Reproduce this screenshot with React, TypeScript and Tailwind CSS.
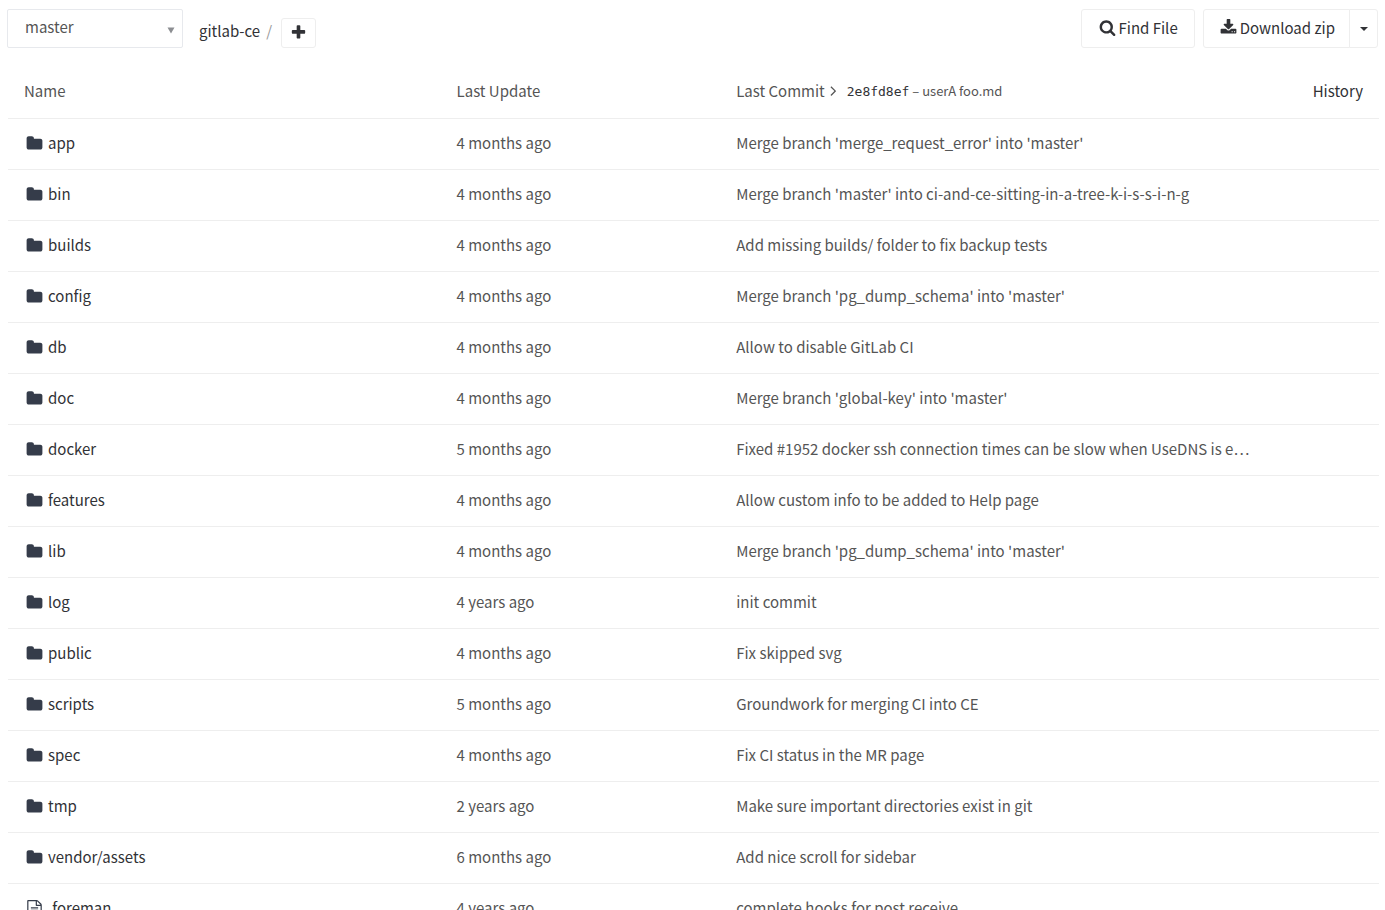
import { useState } from 'react';
import type { ReactNode } from 'react';

interface TreeEntry {
  name: string;
  type: 'folder' | 'file';
  updated: string;
  commit: string;
}

const entries: TreeEntry[] = [
  { name: 'app', type: 'folder', updated: '4 months ago', commit: "Merge branch 'merge_request_error' into 'master'" },
  { name: 'bin', type: 'folder', updated: '4 months ago', commit: "Merge branch 'master' into ci-and-ce-sitting-in-a-tree-k-i-s-s-i-n-g" },
  { name: 'builds', type: 'folder', updated: '4 months ago', commit: 'Add missing builds/ folder to fix backup tests' },
  { name: 'config', type: 'folder', updated: '4 months ago', commit: "Merge branch 'pg_dump_schema' into 'master'" },
  { name: 'db', type: 'folder', updated: '4 months ago', commit: 'Allow to disable GitLab CI' },
  { name: 'doc', type: 'folder', updated: '4 months ago', commit: "Merge branch 'global-key' into 'master'" },
  { name: 'docker', type: 'folder', updated: '5 months ago', commit: 'Fixed #1952 docker ssh connection times can be slow when UseDNS is e…' },
  { name: 'features', type: 'folder', updated: '4 months ago', commit: 'Allow custom info to be added to Help page' },
  { name: 'lib', type: 'folder', updated: '4 months ago', commit: "Merge branch 'pg_dump_schema' into 'master'" },
  { name: 'log', type: 'folder', updated: '4 years ago', commit: 'init commit' },
  { name: 'public', type: 'folder', updated: '4 months ago', commit: 'Fix skipped svg' },
  { name: 'scripts', type: 'folder', updated: '5 months ago', commit: 'Groundwork for merging CI into CE' },
  { name: 'spec', type: 'folder', updated: '4 months ago', commit: 'Fix CI status in the MR page' },
  { name: 'tmp', type: 'folder', updated: '2 years ago', commit: 'Make sure important directories exist in git' },
  { name: 'vendor/assets', type: 'folder', updated: '6 months ago', commit: 'Add nice scroll for sidebar' },
  { name: '.foreman', type: 'file', updated: '4 years ago', commit: 'complete hooks for post receive' },
];

const icons = {
  folder: 'M1728 608v704q0 92-66 158t-158 66h-1216q-92 0-158-66t-66-158v-960q0-92 66-158t158-66h320q92 0 158 66t66 158v32h672q92 0 158 66t66 158z',
  file: 'M1596 380q28 28 48 76t20 88v1152q0 40-28 68t-68 28h-1344q-40 0-68-28t-28-68v-1600q0-40 28-68t68-28h896q40 0 88 20t76 48zm-444-244v376h376q-10-29-22-41l-313-313q-12-12-41-22zm384 1528v-1024h-416q-40 0-68-28t-28-68v-416h-768v1536h1280zm-1024-864q0-14 9-23t23-9h704q14 0 23 9t9 23v64q0 14-9 23t-23 9h-704q-14 0-23-9t-9-23v-64zm736 224q14 0 23 9t9 23v64q0 14-9 23t-23 9h-704q-14 0-23-9t-9-23v-64q0-14 9-23t23-9h704zm0 256q14 0 23 9t9 23v64q0 14-9 23t-23 9h-704q-14 0-23-9t-9-23v-64q0-14 9-23t23-9h704z',
  plus: 'M1600 736v192q0 40-28 68t-68 28h-416v416q0 40-28 68t-68 28h-192q-40 0-68-28t-28-68v-416h-416q-40 0-68-28t-28-68v-192q0-40 28-68t68-28h416v-416q0-40 28-68t68-28h192q40 0 68 28t28 68v416h416q40 0 68 28t28 68z',
  search: 'M1216 832q0-185-131.5-316.5t-316.5-131.5-316.5 131.5-131.5 316.5 131.5 316.5 316.5 131.5 316.5-131.5 131.5-316.5zm512 832q0 52-38 90t-90 38q-54 0-90-38l-343-342q-179 124-399 124-143 0-273.5-55.5t-225-150-150-225-55.5-273.5 55.5-273.5 150-225 225-150 273.5-55.5 273.5 55.5 225 150 150 225 55.5 273.5q0 220-124 399l343 343q37 37 37 90z',
  download: 'M1344 1344q0-26-19-45t-45-19-45 19-19 45 19 45 45 19 45-19 19-45zm256 0q0-26-19-45t-45-19-45 19-19 45 19 45 45 19 45-19 19-45zm128-224v320q0 40-28 68t-68 28h-1472q-40 0-68-28t-28-68v-320q0-40 28-68t68-28h465l135 136q58 56 136 56t136-56l136-136h464q40 0 68 28t28 68zm-325-569q17 41-14 70l-448 448q-18 19-45 19t-45-19l-448-448q-31-29-14-70 17-39 59-39h256v-448q0-26 19-45t45-19h256q26 0 45 19t19 45v448h256q42 0 59 39z',
  angle: 'M1171 960q0 13-10 23l-466 466q-10 10-23 10t-23-10l-50-50q-10-10-10-23t10-23l393-393-393-393q-10-10-10-23t10-23l50-50q10-10 23-10t23 10l466 466q10 10 10 23z',
};

const Icon = ({ name, className = '' }: { name: keyof typeof icons; className?: string }) => (
  <svg viewBox="0 0 1792 1792" fill="currentColor" aria-hidden="true" className={`size-[17px] shrink-0 ${className}`}>
    <path d={icons[name]} />
  </svg>
);

const ToolbarButton = ({ children, className = '', label }: { children: ReactNode; className?: string; label?: string }) => (
  <button
    type="button"
    aria-label={label}
    className={`flex items-center justify-center border border-[#eee] bg-white text-[#313236] hover:bg-gray-50 ${className}`}
  >
    {children}
  </button>
);

const App = () => {
  const [branch, setBranch] = useState('master');

  return (
    <div className="h-screen overflow-hidden bg-white pt-[9px] pr-[6px] pl-[7px] font-['Noto_Sans_CJK_SC','Noto_Sans',sans-serif] text-[15px] leading-[20px] text-[#555]">
      {/* Toolbar */}
      <div className="flex items-start justify-between">
        <div className="flex items-end">
          <div className="relative">
            <select
              aria-label="Branch"
              value={branch}
              onChange={(e) => setBranch(e.target.value)}
              className="block h-[39px] w-44 appearance-none rounded-xs border border-[#e7e9ed] bg-white pb-1 pl-[17px]"
            >
              <option value="master">master</option>
            </select>
            <svg viewBox="0 0 8 7" className="pointer-events-none absolute top-[18px] right-2 h-[7px] w-2" aria-hidden="true">
              <path d="M0.5 0.5h7L4 6.5z" fill="#8c8e92" />
            </svg>
          </div>
          <nav aria-label="Breadcrumb" className="ml-4 flex h-[30px] items-center">
            <a href="#" className="pb-1 text-[#313236]">gitlab-ce</a>
            <span className="ml-[6px] pb-1 text-[#999]">/</span>
            <ToolbarButton label="Add" className="ml-[9px] h-[30px] w-[35px] rounded-[3px] pb-px">
              <Icon name="plus" />
            </ToolbarButton>
          </nav>
        </div>
        <div className="flex pr-px">
          <ToolbarButton className="h-[39px] gap-[3px] rounded-[3px] pr-4 pb-[2px] pl-[17px]">
            <Icon name="search" className="mb-px" />
            Find File
          </ToolbarButton>
          <div className="ml-2 flex">
            <ToolbarButton className="h-[39px] gap-[3px] rounded-l-[3px] pr-[14px] pb-[2px] pl-4">
              <Icon name="download" className="mb-px" />
              Download zip
            </ToolbarButton>
            <ToolbarButton label="More formats" className="-ml-px h-[39px] w-[29px] rounded-r-[3px]">
              <svg viewBox="0 0 8 4" className="h-1 w-2" fill="currentColor" aria-hidden="true">
                <path d="M0 0h8L4 4z" />
              </svg>
            </ToolbarButton>
          </div>
        </div>
      </div>

      {/* File tree */}
      <div className="mt-4 pl-px">
        <table className="w-full table-fixed border-collapse text-left">
          <colgroup>
            <col className="w-[31.55%]" />
            <col className="w-[20.4%]" />
            <col />
          </colgroup>
          <thead>
            <tr className="h-[54px] border-b border-[#eee]">
              <th scope="col" className="px-4 font-normal">Name</th>
              <th scope="col" className="px-4 font-normal">Last Update</th>
              <th scope="col" className="px-4 font-normal">
                <div className="flex items-center justify-between">
                  <div className="flex items-center">
                    Last Commit
                    <Icon name="angle" />
                    <span className="ml-[5px] pt-[2px] text-[13px]">
                      <a href="#" className="font-['DejaVu_Sans_Mono',monospace] text-[#313236]">2e8fd8ef</a>
                      {' – userA foo.md'}
                    </span>
                  </div>
                  <a href="#" className="text-[#313236]">History</a>
                </div>
              </th>
            </tr>
          </thead>
          <tbody>
            {entries.map((entry) => (
              <tr key={entry.name} className="h-[51px] border-b border-[#eee]">
                <td className="px-4 pb-[2px]">
                  <div className="flex items-center pl-[2px]">
                    <Icon name={entry.type} className="mt-px text-[#353c4a]" />
                    <a href="#" className="ml-[5px] text-[#313236]">{entry.name}</a>
                  </div>
                </td>
                <td className="px-4 pb-[2px]">{entry.updated}</td>
                <td className="px-4 pb-[2px]">
                  <a href="#" className="block truncate">{entry.commit}</a>
                </td>
              </tr>
            ))}
          </tbody>
        </table>
      </div>
    </div>
  );
};

export default App;
